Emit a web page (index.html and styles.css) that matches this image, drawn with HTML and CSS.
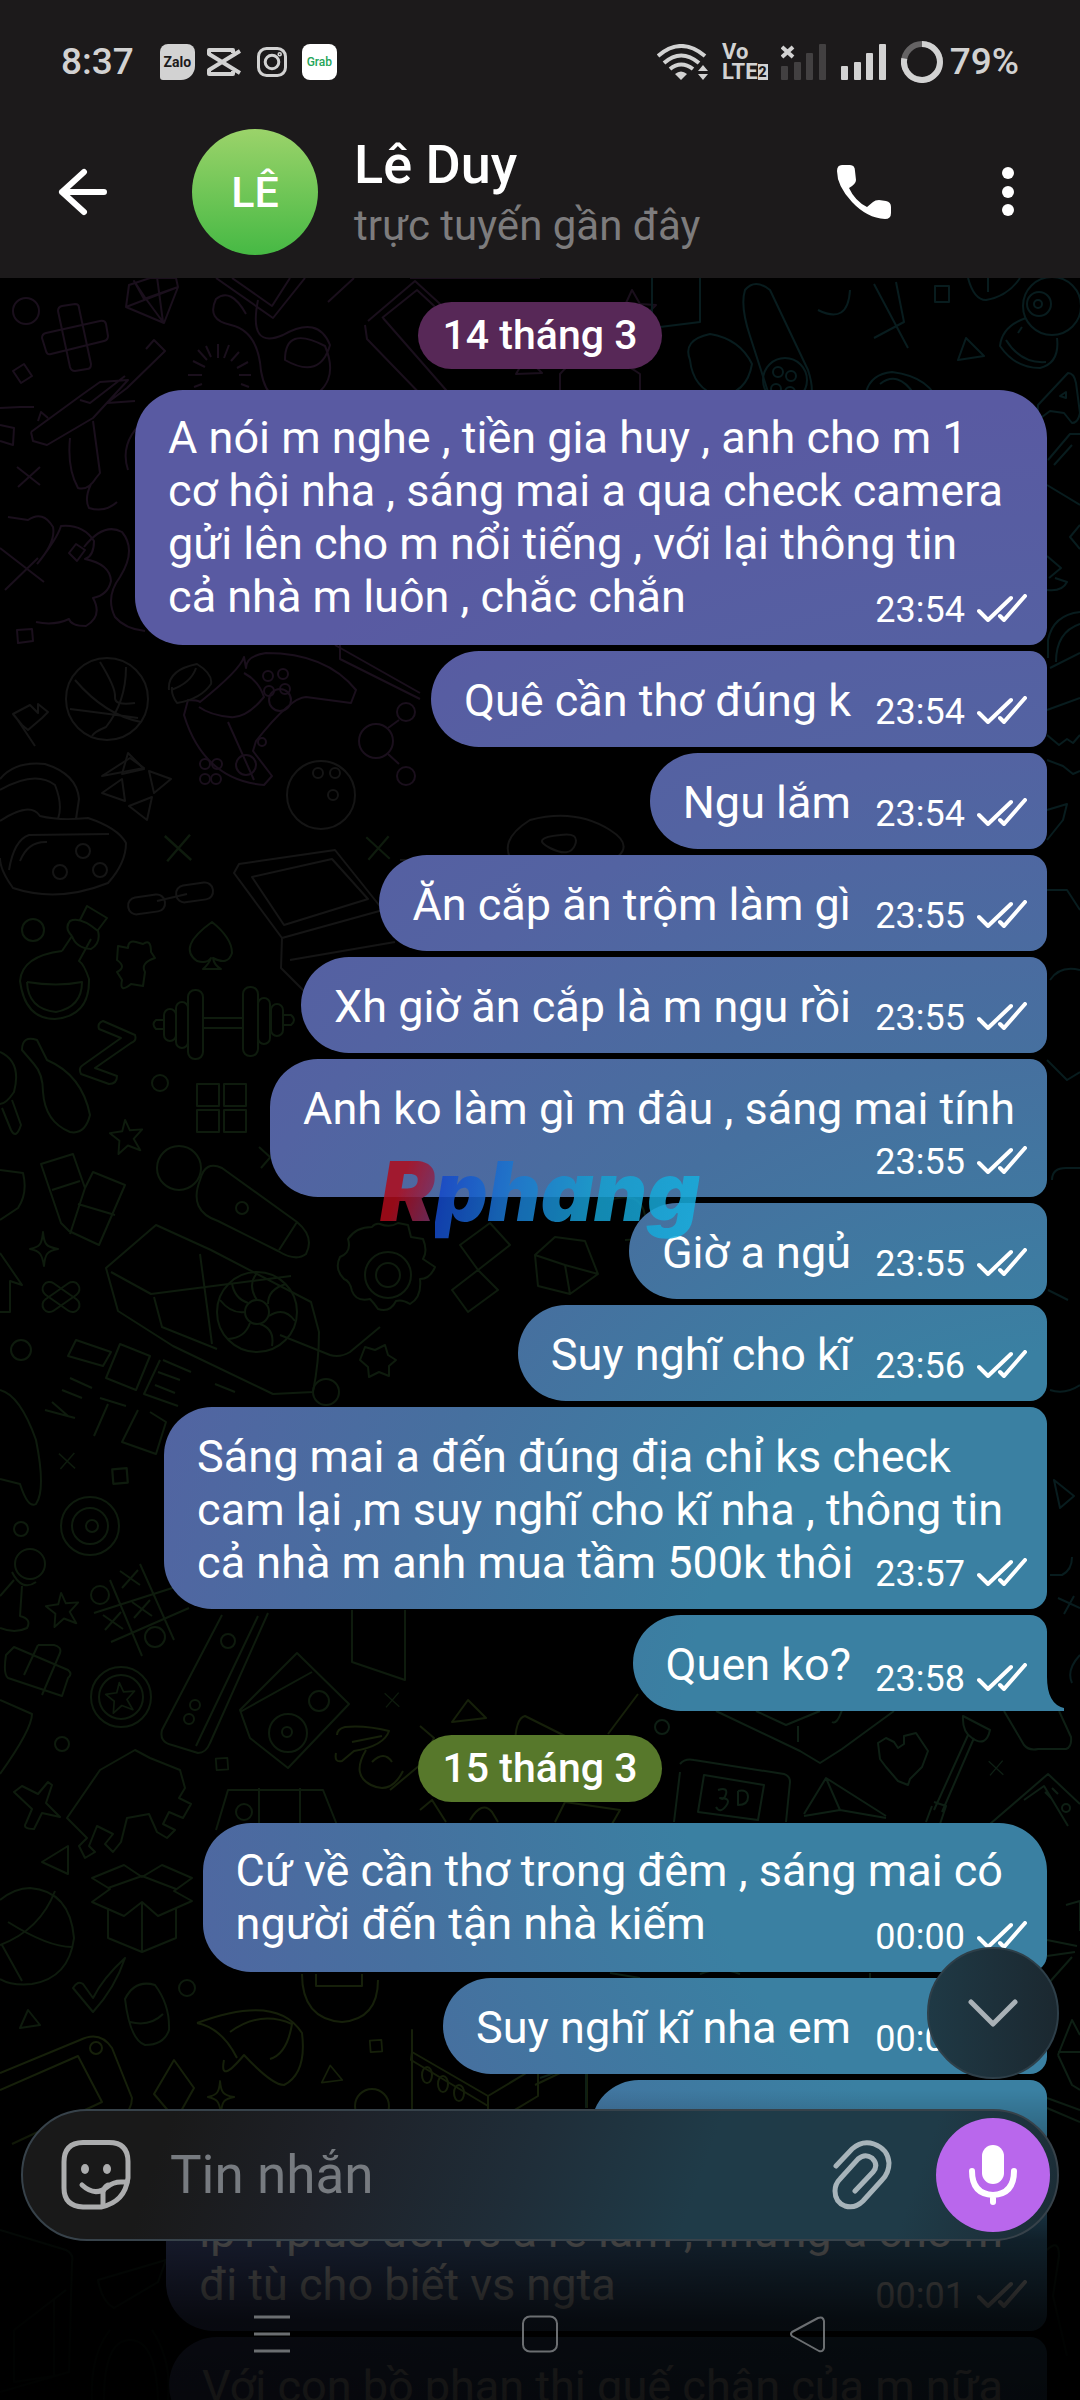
FILE: index.html
```html
<!DOCTYPE html>
<html lang="vi">
<head>
<meta charset="utf-8">
<meta name="viewport" content="width=device-width, initial-scale=1">
<title>Lê Duy</title>
<link rel="stylesheet" href="styles.css">
</head>
<body>
<svg class="sprite" aria-hidden="true">
  <symbol id="ticks" viewBox="0 0 50 28"><path d="M2 17l9 9L34 4M23 22l4 4L48 2" fill="none" stroke="currentColor" stroke-width="4" stroke-linecap="round" stroke-linejoin="round"/></symbol>
  <symbol id="star" viewBox="0 0 40 40"><path d="M18 3l5 11 13-1-9 10 7 12-13-5-10 9 1-14-10-8 13-2z"/></symbol>
  <symbol id="cross" viewBox="0 0 30 30"><path d="M4 5l22 20M25 4L6 26"/></symbol>
  <symbol id="spark" viewBox="0 0 32 38"><path d="M15 2c1 12 3 15 15 17-11 2-13 5-14 17-2-12-4-15-14-17 10-2 12-5 13-17z"/></symbol>
  <symbol id="tri" viewBox="0 0 28 24"><path d="M12 2L2 22l24-3z"/></symbol>
  <symbol id="box" viewBox="0 0 18 18"><path d="M2 3l13-1 1 13-13 1z"/></symbol>
</svg>

<div class="screen">
  <header class="top">
    <div class="status">
      <span class="clock">8:37</span>
      <span class="app-zalo">Zalo</span>
      <svg class="app-icon app-capcut" viewBox="0 0 34 28" fill="none" stroke="#d2d2d2" stroke-width="4" stroke-linejoin="round"><path d="M33 3L2 22v4h24v-3M33 25L2 6V2h24v3"/></svg>
      <svg class="app-icon app-insta" viewBox="0 0 30 30" fill="none" stroke="#d2d2d2" stroke-width="3"><rect x="1.5" y="1.5" width="27" height="27" rx="8"/><circle cx="15" cy="15" r="6.8"/><circle cx="22.7" cy="7.3" r=".8"/></svg>
      <span class="app-grab">Grab</span>
      <span class="spacer"></span>
      <svg class="wifi" viewBox="0 0 51 36" fill="none" stroke="#d2d2d2" stroke-width="4"><path d="M1 12q23-20 47 0M7 19q17-15 35 0M13 25q11-9 23 0"/><path d="M18 30q6-5 12 0l-6 6z" fill="#d2d2d2" stroke="none"/><path d="M41 27l5-6 5 6zM41 30h10l-5 6z" fill="#d2d2d2" stroke="none"/></svg>
      <span class="volte"><span>Vo</span><span class="lte">LTE<b>2</b></span></span>
      <svg class="bars" viewBox="0 0 45 36"><g fill="#424041"><rect y="22" width="7" height="14" rx="1"/><rect x="13" y="18" width="7" height="18" rx="1"/><rect x="25" y="9" width="7" height="27" rx="1"/><rect x="38" width="7" height="36" rx="1"/></g><path d="M1 3l11 10M12 3L1 13" stroke="#d2d2d2" stroke-width="4"/></svg>
      <svg class="bars" viewBox="0 0 45 36" fill="#d2d2d2"><rect y="22" width="7" height="14" rx="1"/><rect x="13" y="18" width="7" height="18" rx="1"/><rect x="25" y="9" width="7" height="27" rx="1"/><rect x="38" width="7" height="36" rx="1"/></svg>
      <svg class="ring" viewBox="0 0 42 42" fill="none" stroke-width="6"><circle cx="21" cy="21" r="18" stroke="#656364"/><path d="M21 3A18 18 0 1 1 3.300 17.500" stroke="#d2d2d2"/></svg>
      <span class="battery">79%</span>
    </div>
    <div class="bar">
      <button class="icon-button back" aria-label="Quay lại"><svg viewBox="0 0 50 48" fill="none" stroke="#fff" stroke-width="6" stroke-linecap="round" stroke-linejoin="round"><path d="M46 24H4M26 4L4 24l22 20"/></svg></button>
      <span class="avatar">LÊ</span>
      <div class="who">
        <h1>Lê Duy</h1>
        <p>trực tuyến gần đây</p>
      </div>
      <button class="icon-button call" aria-label="Gọi"><svg viewBox="0 0 54 54" fill="#fff"><path d="M5 0h8q5 0 5 6l1 9q0 4-7 8 6 13 18 19l6-5q2-2 6-2l7 1q5 1 5 6v6q0 6-6 6Q30 53 15 37 0 21 0 6 0 0 5 0z"/></svg></button>
      <button class="icon-button more" aria-label="Thêm"><svg viewBox="0 0 12 50" fill="#fff"><circle cx="6" cy="6" r="6"/><circle cx="6" cy="25" r="6"/><circle cx="6" cy="43" r="6"/></svg></button>
    </div>
  </header>

  <main class="chat">
    <svg class="wallpaper" viewBox="0 278 1080 2122" preserveAspectRatio="xMidYMin slice" aria-hidden="true">
      <g class="violet">
        <circle cx="26" cy="311" r="13"/><path d="M58 311q0-4 4-5l13-2q4 0 4 4l12 56q0 5-4 5l-12 2q-4 0-5-4zM42 338q0-4 4-5l54-12q5-1 6 3l2 12q0 4-4 5l-53 13q-4 1-5-3z"/>
        <path d="M129 285l21-7h26l2 9-14 36-38-16zM126 307l52-20-34 12-10-18 12 18 17 23-6-45M13 371l11-7 8 12-11 7z"/>
        <path d="M146 349l8-9 11 11-38 37-20 15 28-2M31 432l2 9 14 4 46-27 35-38-28 2-17 12-52 38M38 421l3-9 7 6M70 438q-3 30 8 50 10 3 18-10l4-5-7-52M91 484q-7 15-2 24 16 5 28-6M125 376l-35 27-10-3M17 467l23 18M40 467l-22 20"/>
        <path d="M0 408l20-1h14M0 425l14 3-1 17-13-4"/>
        <path d="M188 375h14M239 375h12M193 361l12 6M198 350l9 10M206 346l5 11M218 344v14M229 345l-5 13M239 352l-8 9M248 362l-11 6M194 387l8-3M249 387l-8-3"/>
        <path d="M216 278l57 40 32-40M232 278l40 28 18-28M258 300q-10 50 25 35 35-20 47 10-10 35-45 15 0-35 40-14 17 40-22 55-35 10-42-30-3-40-30-46-25-5-15-26 15-12 30 15M328 302l26-24"/>
        <path d="M368 321l47-40 60 55M382 318l35-28 28 26M365 325l2 14 60 62M383 318l70 80"/>
        <path d="M410 278h130M505 313l24-8 22 30M560 320q20-30 40 0v20q-18 12-40 0zM632 290l8 14 16 1-12 12 5 16-16-8-14 9 3-17-12-12 16-2zM516 374l10-17 16 16zM560 394v-20q30-35 80 0v25"/>
        <path d="M8 517l20 3q15-10 25 7 3 15-16 37M37 564q20-25 24-38 22-2 33 15 0 15-9 18 25 5 26 22-3 14-18 17 10 18-7 28-15 0-17-7-15 7-33 3M0 548l44 34M38 558L5 590"/>
        <path d="M76 544l9 6-8 11-8-8zM84 547q20-25 38-15 15 18-2 45-15 20-5 40 10 12 30 14M17 630l15-1 1 12-15 2zM128 470q-10-30 22-55"/>
        <path d="M246 668q0-12 20-15 60 0 90 37l-5 13-45-6q-15 0-50 44l-3 10 19 25-8 9q-60-5-80-70l4-15q10 0 12 2 40-32 44-45zM244 673q15 8 20 24-18 22-34 20-20-2-31-10M228 722l26 58"/>
        <circle cx="280" cy="700" r="11"/><circle cx="246" cy="765" r="10"/><circle cx="262" cy="742" r="4"/><circle cx="268" cy="676" r="5"/><circle cx="283" cy="674" r="5"/><circle cx="269" cy="691" r="5"/><circle cx="285" cy="689" r="5"/><circle cx="205" cy="764" r="5"/><circle cx="217" cy="764" r="5"/><circle cx="205" cy="779" r="5"/><circle cx="216" cy="779" r="5"/>
        <circle cx="376" cy="741" r="17"/><circle cx="406" cy="712" r="9"/><circle cx="406" cy="776" r="9"/><path d="M388 728l11-8M388 754l11 10M335 645l85 48M340 645v14l80 40"/>
      </g>
      <g class="slate">
        <circle cx="107" cy="699" r="41"/><path d="M75 680q30 35 66 42M70 709q40 5 68 9M100 662q16 26 15 35t20 6M126 667q0 35-20 60-12 5-14 9"/>
        <path d="M13 714l17-9 8 8v-9l10 8-6 6-14 12-6-5zM15 716l20 30M169 690q-2-20 28-26 16 10 14 20-10 15-34 19-6-8-5-16M196 668q-5 15-25 22M102 776l28-18 14 10z"/>
        <path d="M128 753l16 16-22 5zM149 771l22 8-17 14zM122 779l3 22-23-8zM152 797l-5 23-18-14z"/>
        <circle cx="321" cy="795" r="34"/><circle cx="318" cy="773" r="5"/><circle cx="335" cy="773" r="5"/><circle cx="333" cy="795" r="5"/>
        <path d="M0 779q15-18 45-15 32 10 34 35l-3 20M0 821q30-20 40-5 20 5 48 2 30 10 38 25 0 20-18 40-50 20-95 5-13-18-13-30M9 870q5-30 20-35l80-1M20 861q8-20 27-19M0 790q35-20 55-5 8 20 3 34"/>
        <circle cx="83" cy="851" r="7"/><circle cx="60" cy="872" r="7"/><circle cx="100" cy="870" r="7"/>
        <rect x="128" y="896" width="37" height="17" rx="8" transform="rotate(-8 146 904)"/><rect x="176" y="884" width="37" height="17" rx="8" transform="rotate(-8 194 892)"/><path d="M157 901l30-7"/>
        <path d="M234 873l5-9 96-14 48 60-101 28zM252 877l80-18 36 40-84 26zM282 938l-1 30 40 40M290 960l105-18"/>
        <path d="M530 820q45-12 80 10t-20 40-75-5 15-45zM560 835q20-3 15 10t-25 3 10-13zM400 860h90M420 890l60-20M700 660q40 20 60 60M820 690l40 15"/>
      </g>
      <g class="moss">
        <circle cx="33" cy="930" r="11"/><circle cx="160" cy="1083" r="8"/><circle cx="179" cy="1168" r="22"/><path d="M62 951q-40 5-42 30 5 38 35 38 35-3 34-40-5-15-10-18l12-22M62 951l10-15M72 936q-8-8-2-15 10-5 28 10 3 12-7 18-15-1-19-13M80 920l7-14 20 12-9 12M27 982q30 5 55 0 0 25-26 30-28-3-29-30"/>
        <path d="M212 922q-35 25-15 39 10 3 14-3-2 6-8 11h18q-7-4-8-11 15 8 19-5 0-15-20-31zM118 946l10 2q0-8 8-6l7 2q8-6 8 8l4 6q-15 5-10 14l-2 14-12-2q-12 10-9-4l-5-8q10-5 0-12z"/>
        <g><rect x="188" y="990" width="15" height="69" rx="7"/><rect x="243" y="987" width="15" height="69" rx="7"/><rect x="176" y="1002" width="12" height="46" rx="6"/><rect x="258" y="998" width="12" height="46" rx="6"/><rect x="164" y="1009" width="12" height="32" rx="6"/><rect x="271" y="1004" width="12" height="32" rx="6"/><path d="M203 1018h40M203 1028h40M164 1020h-8q-5 4 0 9h8M283 1015h8q6 5 0 10h-8"/></g>
        <path d="M103 1021l32 14q2 6-4 8l-36 25 22 8q0 8-8 8l-28-10q-3-6 2-9l38-27-22-9q-2-6 4-8zM22 1050q0-15 15-10l10 20q35 15 43 55-5 20-20 17-25-10-27-40 0-18-9-28zM0 1052q22 10 14 40-8 12-14 12M12 1100l9 25q-5 15-10 5l-9-22"/>
        <path d="M197 1084h22v22h-22zM224 1084h22v22h-22zM197 1110h22v22h-22zM224 1110h22v22h-22z"/>
        <use href="#star" x="108" y="1117" width="38" height="38"/><use href="#cross" x="255" y="1142" width="30" height="30"/><use href="#cross" x="160" y="830" width="36" height="36"/><use href="#cross" x="362" y="832" width="32" height="32"/>
        <path d="M41 1164l32-10 12 34 8-16 32 13-26 60-30-14-8-8zM85 1188l-15 46M78 1204l37 11M52 1190l28-9"/>
        <path d="M200 1180q5-20 22-12l75 54q18 15 9 32-10 8-28-3l-60-30q-30-10-18-41zM297 1222l-18 28"/><circle cx="242" cy="1208" r="6"/>
        <path d="M0 1170l23 3q5 20-5 35l-18 12M0 1253l22 32-12-4v31H0"/>
        <use href="#spark" x="28" y="1230" width="32" height="38"/><rect x="40" y="1290" width="42" height="14" rx="7" transform="rotate(35 61 1297)"/><rect x="40" y="1290" width="42" height="14" rx="7" transform="rotate(-35 61 1297)"/>
        <path d="M106 1268l50-43 55 25 100 52 8 30q0 30-6 60l-40 2-100-48-55-35zM111 1272l40 22 140-18M154 1297l8 30 55 22M200 1254l12 90"/>
        <circle cx="257" cy="1312" r="40"/><circle cx="257" cy="1312" r="12"/><path d="M257 1300q-10-15 0-27M268 1304q0-15 18-20M269 1316q15-10 26 5M260 1324q15 5 12 22M250 1323q-5 15-22 16M245 1312q-14 2-25-12M248 1303q-14-5-16-20"/>
        <path d="M372 1227q3-4 8-3 10 4 18-1l10 2 3 12 12 2q5 12 0 20l12 8q-5 12-15 12 2 18-10 25-8-5-14-3-6 12-18 8-4-6-8-10-14 3-18-8-2-10-8-12-10-10-4-22 12-5 8-18 8-12 24-12z"/><circle cx="388" cy="1275" r="23"/><circle cx="388" cy="1275" r="12"/>
        <path d="M460 1245l30-22 20 22-32 25zM478 1270l20 20-30 22-16-22zM535 1255l20-18 30 4 13 33-28 20-32-8zM535 1255l30 10 33 9M565 1265l5 29M610 1200q30-10 35 15t-20 25"/>
        <path d="M280 1335l50 20q10 3 20-3l30-25M365 1347l10 3 10-5 3 10 8 5-7 6v10l-10-4-10 5-1-10-8-7z"/><circle cx="21" cy="1350" r="10"/><circle cx="326" cy="1392" r="13"/><circle cx="21" cy="1529" r="7"/><circle cx="62" cy="1744" r="7"/>
        <path d="M76 1340l35 12-8 14-35-10zM120 1344l30 12-14 34-30-12zM163 1360l28 12M158 1372l22 8M155 1385l20 8M70 1378l22 10M62 1390l20 8M52 1402l16 14M45 1410l30 8M100 1398l26 8M108 1404l-14 32M150 1412l16 10-10 32-34-12 16-32M215 1384l20 8M160 1360l-16 34 34 12"/>
        <path d="M0 1390q20 5 36 50 10 50 0 64-8 5-16-20l-20-5"/><circle cx="92" cy="1526" r="6"/><circle cx="90" cy="1526" r="18"/><circle cx="90" cy="1526" r="29"/><use href="#cross" x="56" y="1450" width="22" height="22"/><use href="#box" x="110" y="1466" width="20" height="20"/>
        <path d="M110 1580l32 76M140 1564l34 76M94 1613l94-30M111 1642l78-34M120 1571l20 14M138 1570l-16 18M132 1602l20 14M150 1600l-16 18M103 1615l20 14M121 1612l-16 18"/><circle cx="100" cy="1595" r="9"/><circle cx="155" cy="1637" r="10"/><circle cx="30" cy="1564" r="15"/>
        <path d="M12 1572q10 20 24 10M14 1580l-14 16M22 1586l-2 30q12 3 7 12-12 6-27 0"/><use href="#star" x="44" y="1590" width="38" height="38"/>
        <path d="M6 1655l8-8 54 23q5 4 0 8l-6 18-54-18q-5-4-2-23zM38 1645h16q8 2 6 8l-18 42M24 1675l14-30M0 1700l32 14q0 15-32 60"/>
        <circle cx="121" cy="1697" r="30"/><circle cx="121" cy="1697" r="22"/><use href="#star" x="104" y="1680" width="34" height="34"/>
        <path d="M222 1615l-60 115q-3 12 10 15l26 8q8 0 12-10l58-130M258 1616l-62 130"/><circle cx="228" cy="1641" r="7"/><circle cx="195" cy="1705" r="5"/><circle cx="189" cy="1719" r="5"/>
        <path d="M297 1653l52 51-61 64-38-30-10-28zM240 1712l72-40M250 1738l-8-22"/><circle cx="288" cy="1733" r="19"/><circle cx="319" cy="1701" r="10"/><circle cx="287" cy="1732" r="5"/>
        <path d="M352 1610v52l53 18v-70M14 1792l8-6 16 8 10-12 4 3-6 18 14 14-18-4-8 16q-12 0-8-6l6-14zM100 1770l35-20 15 8 30 12 5 18-6 10 12 6-8 14-14-6-6 12 12 6-8 8-10-6-8-18-22 4-6 24-8 10-8-8 8-10-16-8-8 20 6 6-10 6-6-12 8-8-20-20z"/>
        <use href="#box" x="214" y="1756" width="16" height="16"/><use href="#cross" x="382" y="1690" width="20" height="20"/>
        <path d="M216 1830l12-40h95l16 40M259 1788v40M300 1788v40"/><circle cx="244" cy="1812" r="8"/>
        <path d="M42 1862l26-16v28zM0 1900q15-12 30-12 40 3 44 50-5 40-42 46-20 2-32-5M0 1945q40-15 55-54M8 1922q40 25 64 25M2 1945l20 36"/>
        <path d="M92 1878l32-13 18 12 20-12 30 13-18 13 18 10-34 15-16-14-18 14-32-14 18-13zM108 1908v30l34 14 34-14v-30M142 1903v49M108 1888l34-12 34 13"/>
        <path d="M73 1988q5-8 10-4l10 14q10-20 32-40-10 30-32 54zM125 1999q10-20 30-14 15 20 14 45-5 15-24 15-15-5-20-46zM130 2022q20 5 33-8M20 2028l8-18 12 15z"/>
        <circle cx="187" cy="1988" r="8"/>
      </g>
      <g class="olive">
        <path d="M197 2023q80-30 105 10 5 40-18 52-12 0-40-30-25 30-20 5M230 2032q30-22 62-8-5 30-22 35M197 2023q25 5 40 35M302 1974q0 45 40 48 36-3 36-42M316 1974v12h46v-12"/>
        <path d="M0 2073l80-33q20-10 32 8l20 50q0 12-12 22M0 2090l78-34 24 46-90 42M174 2060l20 28-18 32-22-26z"/><circle cx="96" cy="2048" r="6"/>
        <use href="#spark" x="206" y="2078" width="30" height="38"/><use href="#tri" x="320" y="2062" width="24" height="24"/><use href="#box" x="368" y="2038" width="16" height="16"/><circle cx="372" cy="2106" r="17"/>
        <path d="M412 2030v80l76 20v-34l-76-44zM412 2052l-1 8 77 46M488 2096l50-30v30l-50 30M535 2085l52-25v48"/><ellipse cx="427" cy="2075" rx="5" ry="8"/><ellipse cx="443" cy="2084" rx="5" ry="8"/><ellipse cx="459" cy="2093" rx="5" ry="8"/>
        <path d="M337 1735q0-6 8-8 20-2 44 4-5 15-35 20l-12 10q-8 2-6-8M352 1742l30-6M366 1750q-15 25 5 35t32-14M372 1762q12-12 20 0M390 1790l30-25"/>
        <path d="M452 1722l16-22 18 18zM420 1726l14 12-10 20M515 1748q0-30 10-32l40 20M608 1734l30-40M420 1810l12-10 14 22M470 1820q12-20 22-8l6 10M555 1822l10-20 55 8-8 14"/>
      </g>
      <g class="teal">
        <path d="M652 278v50l48-6V278M745 290q10-12 25 0l38 80q10 30-6 40-22 12-32-12l-20-62q-10-30-5-46zM818 310q30 15 32-20M874 284l34 64M896 282l8 40-30 16M935 286h14v16h-14zM690 360q-8-20 20-26 30 5 42 30-5 30-34 32-25-8-28-36z"/>
        <circle cx="785" cy="380" r="22"/><circle cx="778" cy="372" r="5"/><circle cx="791" cy="376" r="5"/><circle cx="776" cy="389" r="5"/><circle cx="790" cy="392" r="5"/>
        <path d="M866 392q5-18 26-20 40 5 48 35M880 384q18-14 34 10M958 360l8-22 18 18zM968 278q6 22 18 22 22-4 34-22M988 278v14"/>
        <circle cx="1052" cy="306" r="29"/><circle cx="1039" cy="304" r="12"/><circle cx="1038" cy="304" r="4"/><path d="M1026 318q-24 8-26 28 15 22 40 22 20-5 17-30M1006 340q15 24 40 22M1018 333l4-6M1038 405l30-32q6 0 8 10l4 30q-2 10-8 10l-8-10-14-2-8 6q-5 2-4-12zM1060 396l6-4v6zM1048 460l22-26h10M1054 465l18-20M1047 485l33 20M1080 525l-10 12 10 12M1047 556l14 12-12 10M1055 578l12 4q-5 10-20 8M1048 658V640q5-25 32-28M1056 662q0-30 24-38M1050 668l30-15M1047 710l33-12M1047 735l12 10 8-6 6 4 7-8M1047 760l16 6 10 8 7-3M1047 810l20-6-4 16-16 20M1047 890h20l13 20M1050 980q10-15 30-10M1047 1060l20 20 13-8M1052 1180q0-12 14-12h14M1048 1290l20 10M1050 1390q15 5 30-5M1054 1480l20 16-14 12z"/>
        <path d="M1050 1575h12q10-5 10-18M1058 1598l22 10M1074 1596l-10 18M1080 1655q-14 15-8 28"/>
      </g>
      <g class="fern">
        <path d="M716 1711l84 40 20 12 22-14 52-38M756 1711l30 14 34-14M798 1726v16M842 1710q-5 15-10 12"/><path d="M878 1743l8-5 8 4 4 6 6-4v-8l12-3 12 18-6 16-12 12-2 6-10-4-12-14-6-8z"/><use href="#cross" x="986" y="1758" width="20" height="20"/>
        <path d="M963 1716l27 14q-4 18-18 8-10-6-9-22zM968 1735l-34 75M974 1738l-32 74M934 1802l12 4-6 18M932 1806l-6 16M1004 1711l20 34q5 6 14 4h28q6-2 5-12l-12-26"/><circle cx="662" cy="1727" r="7"/>
        <path d="M680 1764q5-6 14-4l90 14q6 2 6 8l-4 40M680 1772l-6 50M704 1775l60 10-6 35-60-8zM718 1790q10-3 8 4t-6 4q12 0 6 8t-10 1M738 1791v14q10 0 10-8t-10-6M804 1814l22-36 60 38M826 1778l14 32 46 8M804 1816l36-6"/><path d="M990 1824l58-50 32 30M1024 1800l20-14 24 40M1045 1792l6 6M1052 1788l6 6"/><circle cx="1066" cy="1808" r="4"/>
        <path d="M1066 1905l14-4v30M1047 1940l30 6M1047 1956l28-4M1047 1985l25-28M1058 2055l14-35 8 15M1058 2055l14 30 8 5M1058 2052h22M1047 2098l33 12M1047 2108l33 14M540 2078l46-16v46M610 1973l30 5M700 1974q20-8 40 0M870 1973v6"/>
        <path d="M0 2230l66 20q8 4 6 12l-3 110-69 20M14 2330l52-40M14 2330v52l40-6V2300M98 2280l68-20-8 22-44 26q-12-6-16-28zM1047 2250q12-12 12 6l-6 40 14 60M110 2330q-20 25-18 70M152 2330q20 30 16 70M104 2400q0-60 26-60t28 60"/>
      </g>
    </svg>

    <section class="day">
      <time class="chip chip-plum">14 tháng 3</time>
      <div class="bubble first"><p>A nói m nghe , tiền gia huy , anh cho m 1<br>cơ hội nha , sáng mai a qua check camera<br>gửi lên cho m nổi tiếng , với lại thông tin<br>cả nhà m luôn , chắc chắn</p><span class="meta"><time>23:54</time><svg><use href="#ticks"/></svg></span></div>
      <div class="bubble short"><p>Quê cần thơ đúng k</p><span class="meta"><time>23:54</time><svg><use href="#ticks"/></svg></span></div>
      <div class="bubble short"><p>Ngu lắm</p><span class="meta"><time>23:54</time><svg><use href="#ticks"/></svg></span></div>
      <div class="bubble short"><p>Ăn cắp ăn trộm làm gì</p><span class="meta"><time>23:55</time><svg><use href="#ticks"/></svg></span></div>
      <div class="bubble short"><p>Xh giờ ăn cắp là m ngu rồi</p><span class="meta"><time>23:55</time><svg><use href="#ticks"/></svg></span></div>
      <div class="bubble stacked"><p>Anh ko làm gì m đâu , sáng mai tính</p><span class="meta"><time>23:55</time><svg><use href="#ticks"/></svg></span></div>
      <div class="bubble short"><p>Giờ a ngủ</p><span class="meta"><time>23:55</time><svg><use href="#ticks"/></svg></span></div>
      <div class="bubble short"><p>Suy nghĩ cho kĩ</p><span class="meta"><time>23:56</time><svg><use href="#ticks"/></svg></span></div>
      <div class="bubble"><p>Sáng mai a đến đúng địa chỉ ks check<br>cam lại ,m suy nghĩ cho kĩ nha , thông tin<br>cả nhà m anh mua tầm 500k thôi</p><span class="meta"><time>23:57</time><svg><use href="#ticks"/></svg></span></div>
      <div class="bubble short last"><p>Quen ko?</p><span class="meta"><time>23:58</time><svg><use href="#ticks"/></svg></span><svg class="tail" viewBox="0 0 17 34"><path d="M0 0q0 27 17 31v3H0z"/></svg></div>
    </section>

    <section class="day">
      <time class="chip chip-olive">15 tháng 3</time>
      <div class="bubble first"><p>Cứ về cần thơ trong đêm , sáng mai có<br>người đến tận nhà kiếm</p><span class="meta"><time>00:00</time><svg><use href="#ticks"/></svg></span></div>
      <div class="bubble short"><p>Suy nghĩ kĩ nha em</p><span class="meta"><time>00:00</time><svg><use href="#ticks"/></svg></span></div>
      <div class="bubble covered"></div>
      <div class="bubble"><p>ip14plus đổi vs a rẻ lắm , nhưng a cho m<br>đi tù cho biết vs ngta</p><span class="meta"><time>00:01</time><svg><use href="#ticks"/></svg></span></div>
      <div class="bubble"><p>Với con bồ phan thị quế chân của m nữa</p></div>
    </section>
    <div class="shade"></div>
  </main>

  <div class="watermark" aria-hidden="true"><span class="mark-red">R</span><span class="mark-blue">phang</span></div>

  <div class="dock">
    <button class="to-bottom" aria-label="Xuống cuối"><svg viewBox="0 0 50 28" fill="none" stroke="#a9b1b6" stroke-width="5" stroke-linecap="round" stroke-linejoin="round"><path d="M3 3l22 22L47 3"/></svg></button>
    <form class="composer">
      <button type="button" class="icon-button sticker" aria-label="Nhãn dán"><svg viewBox="0 0 70 70" fill="none" stroke="#acadae" stroke-width="5" stroke-linecap="round" stroke-linejoin="round"><path d="M22 2.500h26q19 0 19 19V38q-3 24-27 29H22q-19-1-19-19V22q0-19 19-19.500z"/><path d="M21 45q13 12 25 2 6-5 14-5h6M42 65V52q1-5 5-7"/><g fill="#acadae" stroke="none"><ellipse cx="24" cy="29" rx="4" ry="5"/><ellipse cx="46" cy="29" rx="4" ry="5"/></g></svg></button>
      <input type="text" aria-label="Tin nhắn" placeholder="Tin nhắn">
      <button type="button" class="icon-button clip" aria-label="Đính kèm"><svg viewBox="0 0 60 70" fill="none" stroke="#a7b4ba" stroke-width="5" stroke-linecap="round"><path d="M4 26L20 9Q30 0 42 4q14 5 15 19 0 10-7 17L31 61q-8 8-18 5Q3 62 3 51q0-7 5-12L26 19q7-6 14-1 7 7 1 14L23 51"/></svg></button>
      <button type="button" class="mic" aria-label="Ghi âm"><svg viewBox="0 0 48 60"><rect x="13" y="0" width="22" height="39" rx="11" fill="#fff"/><path d="M3 26q0 23 21 24 21-1 21-24M24 50v7" fill="none" stroke="#fff" stroke-width="6" stroke-linecap="round"/></svg></button>
    </form>
    <nav class="nav">
      <button class="icon-button" aria-label="Gần đây"><svg viewBox="0 0 36 38" stroke="#6b6e71" stroke-width="3"><path d="M0 2h36M0 19h36M0 36h36"/></svg></button>
      <button class="icon-button" aria-label="Trang chủ"><svg viewBox="0 0 36 38" fill="none" stroke="#6b6e71" stroke-width="2"><rect x="1" y="1.500" width="34" height="35" rx="7"/></svg></button>
      <button class="icon-button" aria-label="Trở về"><svg viewBox="0 0 36 38" fill="none" stroke="#6b6e71" stroke-width="2" stroke-linejoin="round"><path d="M2 17L28 3q5-2 6 3v27q-1 4-5 3L2 21q-2-2 0-4z"/></svg></button>
    </nav>
  </div>
</div>
</body>
</html>
```
FILE: styles.css
```css
* { box-sizing: border-box; }

body {
  margin: 0;
  background: #000;
  color: #fff;
  font-family: Roboto, "Noto Sans", sans-serif;
}

button, input {
  margin: 0;
  padding: 0;
  border: 0;
  background: none;
  color: inherit;
  font: inherit;
}

h1, p { margin: 0; }
svg { display: block; }

.sprite {
  position: absolute;
  width: 0;
  height: 0;
}

.screen {
  position: relative;
  display: flex;
  flex-direction: column;
  height: 100vh;
  overflow: hidden;
}

/* Status bar and chat header */

.top {
  flex: none;
  background: #1c1a1b;
}

.status {
  display: flex;
  align-items: center;
  height: 88px;
  padding: 36px 61px 0 61px;
  color: #d2d2d2;
  font-size: 37px;
  font-weight: 500;
  line-height: 44px;
}

.spacer { flex: 1; }
.clock { margin-right: 26px; }

.app-zalo, .app-grab {
  display: flex;
  align-items: center;
  justify-content: center;
  width: 35px;
  height: 36px;
  font-weight: 700;
}

.app-zalo {
  border-radius: 8px 8px 14px 3px;
  background: #d2d2d2;
  color: #1c1a1b;
  font-size: 14px;
  line-height: 16px;
}

.app-grab {
  border-radius: 8px;
  background: #fff;
  color: #25a55a;
  font-size: 12px;
  font-weight: 500;
  line-height: 14px;
}

.app-capcut { width: 34px; height: 28px; margin: 0 16px 0 12px; }
.app-insta { width: 30px; height: 30px; margin-right: 15px; }
.wifi { width: 51px; height: 36px; margin-right: 14px; }
.bars { width: 45px; height: 36px; margin-right: 15px; }
.ring { width: 42px; height: 42px; margin-right: 7px; }

.volte {
  display: grid;
  margin-right: 13px;
  font-size: 22px;
  font-weight: 700;
  line-height: 20px;
}

.lte { display: flex; align-items: center; }

.lte b {
  padding: 0 1px;
  background: #d2d2d2;
  color: #1c1a1b;
  font-size: 14px;
  line-height: 16px;
}

.bar {
  display: flex;
  align-items: center;
  height: 190px;
  padding: 22px 66px 4px 58px;
}

.icon-button {
  display: flex;
  align-items: center;
  justify-content: center;
}

.back svg { width: 50px; height: 48px; }
.call svg { width: 54px; height: 54px; }
.more svg { width: 12px; height: 50px; }
.more { margin-left: 111px; }

.avatar {
  display: flex;
  align-items: center;
  justify-content: center;
  width: 126px;
  height: 126px;
  margin: 0 36px 0 84px;
  border-radius: 50%;
  background: linear-gradient(#9bd36a, #46b944);
  font-size: 43px;
  font-weight: 500;
}

.who { flex: 1; }

.who h1 {
  font-size: 54px;
  font-weight: 500;
  line-height: 62px;
}

.who p {
  margin-top: 5px;
  color: #7d7c7d;
  font-size: 42px;
  line-height: 50px;
}

/* Conversation */

.chat {
  position: relative;
  flex: 1;
  min-height: 0;
  overflow: hidden;
}

.wallpaper {
  position: absolute;
  inset: 0;
  width: 100%;
  height: 100%;
  fill: none;
  stroke-width: 2;
  stroke-linejoin: round;
}

.violet { stroke: #1a0f1c; }
.slate { stroke: #151515; }
.moss { stroke: #0e1b0d; }
.olive { stroke: #16200a; }
.teal { stroke: #081c1e; }
.fern { stroke: #0e1f14; }

.day {
  position: relative;
  display: flex;
  flex-direction: column;
  align-items: flex-end;
  gap: 6px;
  padding: 24px 33px 0;
}

.chip {
  align-self: center;
  margin-bottom: 15px;
  padding: 0 25px;
  border-radius: 34px;
  font-size: 41px;
  font-weight: 500;
  line-height: 67px;
}

.chip-plum { background: #572857; }
.chip-olive { background: #57782b; }

.bubble {
  position: relative;
  padding: 23px 44px 20px 33px;
  border-radius: 48px 17px 17px 48px;
  background: radial-gradient(circle at 100% 73%, #3a80a2 400px, #46709f 700px, #5363a2 1000px, #595aa2 1350px) fixed;
  font-size: 45px;
  line-height: 53px;
  white-space: nowrap;
}

.bubble.first {
  padding-top: 21px;
  padding-bottom: 22px;
  border-top-right-radius: 48px;
}

.bubble.short { padding-right: 196px; }

.bubble.stacked {
  padding-right: 32px;
  padding-bottom: 62px;
}

.bubble.last { border-bottom-right-radius: 0; }

.bubble.covered {
  width: 45%;
  height: 96px;
}

.meta {
  position: absolute;
  right: 20px;
  bottom: 14px;
  display: flex;
  align-items: baseline;
  gap: 12px;
  font-size: 36px;
  line-height: 42px;
}

.last .meta { bottom: 11px; }
.meta svg { width: 50px; height: 28px; }

.tail {
  position: absolute;
  right: -17px;
  bottom: 0;
  width: 17px;
  height: 34px;
  fill: #3a80a2;
}

.shade {
  position: absolute;
  inset: auto 0 0;
  height: 310px;
  background: linear-gradient(transparent, rgba(0, 0, 0, .74) 150px, rgba(0, 0, 0, .9) 230px, rgba(0, 0, 0, .92));
}

.watermark {
  position: absolute;
  top: 1142px;
  left: 50%;
  transform: translateX(-50%);
  font-family: Inter, Roboto, sans-serif;
  font-size: 82px;
  font-style: italic;
  font-weight: 900;
  line-height: 100px;
  opacity: .85;
}

.mark-red, .mark-blue {
  background: linear-gradient(110deg, #b00c1c 40%, #6a3a78);
  background-clip: text;
  -webkit-background-clip: text;
  color: transparent;
}

.mark-blue { background-image: linear-gradient(100deg, #1440c8, #1a78d0 30%, #16a0d0 60%, #18b0e0); }

/* Composer, jump button and system navigation */

.dock {
  position: absolute;
  inset: auto 0 0;
  display: flex;
  flex-direction: column;
}

.to-bottom {
  display: flex;
  align-items: center;
  justify-content: center;
  align-self: flex-end;
  width: 132px;
  height: 132px;
  margin: 0 21px 30px;
  border: 2px solid #2e3f49;
  border-radius: 50%;
  background: linear-gradient(90deg, #1f3945, #1b2830);
}

.to-bottom svg { width: 50px; height: 28px; }

.composer {
  display: flex;
  align-items: center;
  height: 132px;
  margin: 0 21px;
  padding: 0 7px 0 38px;
  border: 2px solid #37424a;
  border-radius: 66px;
  background: linear-gradient(110deg, #191919 14%, #1e2128 30%, #1f2d38 48%, #1f3b48 65%, #1f3b48 85%, #1b2b34);
}

.sticker svg { width: 70px; height: 70px; }
.clip svg { width: 60px; height: 70px; }

.composer input {
  flex: 1;
  min-width: 0;
  height: 80px;
  margin: 0 24px 0 39px;
  outline: none;
  font-size: 53px;
}

.composer input::placeholder { color: #777b80; opacity: 1; }

.mic {
  display: flex;
  align-items: center;
  justify-content: center;
  width: 114px;
  height: 114px;
  margin-left: 44px;
  border-radius: 50%;
  background: #b967ec;
}

.mic svg { width: 48px; height: 60px; }

.nav {
  display: grid;
  grid-template-columns: repeat(3, 1fr);
  height: 132px;
  margin-top: 27px;
  padding: 0 138px;
}

.nav svg { width: 36px; height: 38px; }
```
